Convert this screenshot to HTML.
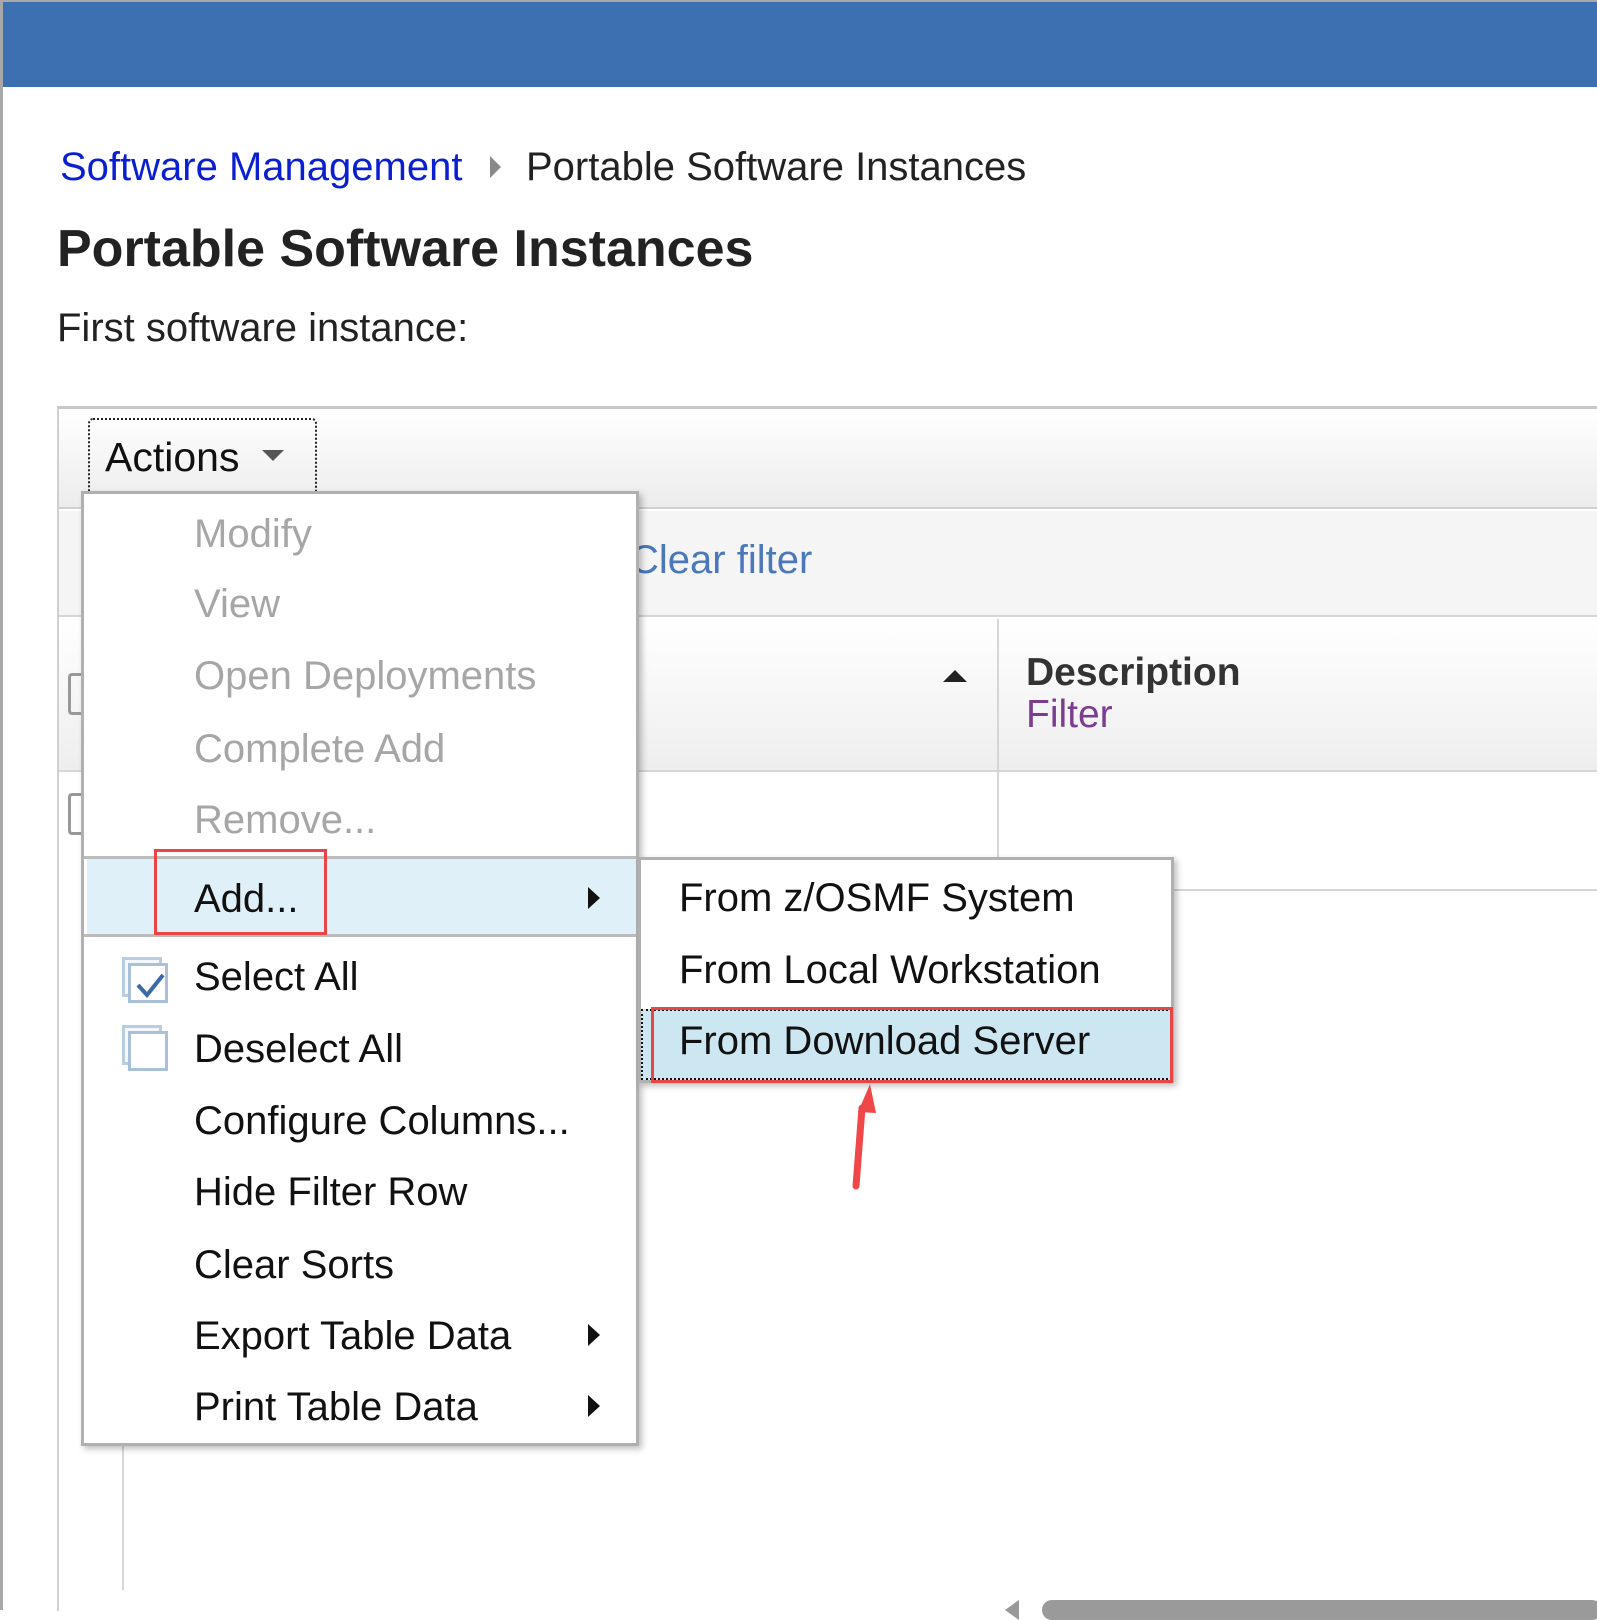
<!DOCTYPE html>
<html><head><style>
*{margin:0;padding:0;box-sizing:border-box}
body{width:1597px;height:1610px;position:relative;overflow:hidden;background:#fff;font-family:"Liberation Sans",Arial,sans-serif;color:#222}
.a{position:absolute;white-space:nowrap}
.mi{position:absolute;left:110px;font-size:40px;line-height:40px}
.dis{color:#a6a6a6}
</style></head><body>
<div class="a" style="left:0;top:0;width:3px;height:1610px;background:#a8a8a8"></div>
<div class="a" style="left:3px;top:0;width:1594px;height:87px;background:#3c70b0;border-top:2px solid #a8a8a8"></div>
<div class="a" style="left:60px;top:145px;font-size:40px;line-height:44px;color:#0a1fd0">Software Management</div>
<div class="a" style="left:490px;top:156px;width:0;height:0;border-left:11px solid #888;border-top:11px solid transparent;border-bottom:11px solid transparent"></div>
<div class="a" style="left:526px;top:145px;font-size:40px;line-height:44px;color:#222">Portable Software Instances</div>
<div class="a" style="left:57px;top:222px;font-size:52px;line-height:54px;font-weight:bold;color:#222">Portable Software Instances</div>
<div class="a" style="left:57px;top:306px;font-size:40px;line-height:44px;color:#222">First software instance:</div>

<!-- table -->
<div class="a" style="left:57px;top:406px;width:1540px;height:1205px;border-left:2px solid #d0d0d0;border-top:3px solid #c8c8c8"></div>
<div class="a" style="left:59px;top:409px;width:1538px;height:100px;background:linear-gradient(#fff,#ececec);border-bottom:2px solid #d0d0d0"></div>
<div class="a" style="left:88px;top:418px;width:229px;height:75px;border:2px dotted #222;border-bottom:none;border-radius:5px 5px 0 0"></div>
<div class="a" style="left:105px;top:435px;font-size:41px;line-height:44px;color:#111">Actions</div>
<div class="a" style="left:262px;top:450px;width:0;height:0;border-top:11px solid #555;border-left:11px solid transparent;border-right:11px solid transparent"></div>
<div class="a" style="left:59px;top:511px;width:1538px;height:106px;background:#f5f5f5;border-bottom:2px solid #d6d6d6"></div>
<div class="a" style="left:630px;top:538px;font-size:40px;line-height:44px;color:#4a78b8">Clear filter</div>
<div class="a" style="left:59px;top:619px;width:1538px;height:153px;background:linear-gradient(#fff,#eeeeee);border-bottom:2px solid #d6d6d6"></div>
<div class="a" style="left:997px;top:619px;width:2px;height:272px;background:#d6d6d6"></div>
<div class="a" style="left:943px;top:670px;width:0;height:0;border-bottom:12px solid #222;border-left:12px solid transparent;border-right:12px solid transparent"></div>
<div class="a" style="left:1026px;top:651px;font-size:39px;line-height:44px;font-weight:bold;color:#333">Description</div>
<div class="a" style="left:1026px;top:693px;font-size:39px;line-height:44px;color:#7a3d90">Filter</div>
<div class="a" style="left:1166px;top:889px;width:431px;height:2px;background:#d6d6d6"></div>
<div class="a" style="left:68px;top:673px;width:14px;height:42px;border:3px solid #999;border-right:none;border-radius:4px 0 0 4px"></div>
<div class="a" style="left:68px;top:793px;width:14px;height:42px;border:3px solid #999;border-right:none;border-radius:4px 0 0 4px"></div>
<div class="a" style="left:122px;top:1440px;width:2px;height:150px;background:#d8d8d8"></div>
<div class="a" style="left:1042px;top:1600px;width:560px;height:20px;background:#9a9a9a;border-radius:10px"></div>
<div class="a" style="left:1005px;top:1600px;width:0;height:0;border-right:14px solid #999;border-top:10px solid transparent;border-bottom:10px solid transparent"></div>

<!-- menu -->
<div class="a" style="left:81px;top:491px;width:558px;height:955px;background:#fff;border:3px solid #b0b0b0;box-shadow:3px 3px 6px rgba(0,0,0,.25)">
 <div class="mi dis" style="top:20px">Modify</div>
 <div class="mi dis" style="top:90px">View</div>
 <div class="mi dis" style="top:162px">Open Deployments</div>
 <div class="mi dis" style="top:235px">Complete Add</div>
 <div class="mi dis" style="top:306px">Remove...</div>
 <div class="a" style="left:0;top:362px;width:552px;height:3px;background:#bbb"></div>
 <div class="a" style="left:3px;top:365px;width:549px;height:75px;background:#dff0f8"></div>
 <div class="mi" style="top:385px;color:#111">Add...</div>
 <div class="a" style="left:504px;top:393px;width:0;height:0;border-left:12px solid #111;border-top:11px solid transparent;border-bottom:11px solid transparent"></div>
 <div class="a" style="left:0;top:440px;width:552px;height:3px;background:#bbb"></div>
 <div class="a" style="left:38px;top:463px;width:40px;height:40px;border:3px solid #b8cde0;background:#f4f8fc"></div>
 <div class="a" style="left:44px;top:469px;width:40px;height:40px;border:3px solid #a9c0d8;background:#fff"></div>
 <svg class="a" style="left:46px;top:471px" width="40" height="40"><path d="M8 20 L17 30 L33 10" stroke="#3a6aa8" stroke-width="4" fill="none"/></svg>
 <div class="mi" style="top:463px;color:#111">Select All</div>
 <div class="a" style="left:38px;top:531px;width:40px;height:40px;border:3px solid #b8cde0;background:#f4f8fc"></div>
 <div class="a" style="left:44px;top:537px;width:40px;height:40px;border:3px solid #a9c0d8;background:#fff"></div>
 <div class="mi" style="top:535px;color:#111">Deselect All</div>
 <div class="mi" style="top:607px;color:#111">Configure Columns...</div>
 <div class="mi" style="top:678px;color:#111">Hide Filter Row</div>
 <div class="mi" style="top:751px;color:#111">Clear Sorts</div>
 <div class="mi" style="top:822px;color:#111">Export Table Data</div>
 <div class="a" style="left:504px;top:830px;width:0;height:0;border-left:12px solid #111;border-top:11px solid transparent;border-bottom:11px solid transparent"></div>
 <div class="mi" style="top:893px;color:#111">Print Table Data</div>
 <div class="a" style="left:504px;top:901px;width:0;height:0;border-left:12px solid #111;border-top:11px solid transparent;border-bottom:11px solid transparent"></div>
</div>
<div class="a" style="left:154px;top:849px;width:173px;height:86px;border:3px solid #e84545"></div>

<!-- submenu -->
<div class="a" style="left:638px;top:857px;width:536px;height:226px;background:#fff;border:3px solid #b0b0b0;box-shadow:3px 3px 6px rgba(0,0,0,.25)"></div>
<div class="a" style="left:679px;top:876px;font-size:40px;line-height:44px;color:#111">From z/OSMF System</div>
<div class="a" style="left:679px;top:948px;font-size:40px;line-height:44px;color:#111">From Local Workstation</div>
<div class="a" style="left:641px;top:1009px;width:531px;height:71px;background:#cde7f2;border:2px dotted #111"></div>
<div class="a" style="left:651px;top:1007px;width:522px;height:76px;border:3px solid #e84545"></div>
<div class="a" style="left:679px;top:1019px;font-size:40px;line-height:44px;color:#111">From Download Server</div>
<svg class="a" style="left:842px;top:1078px" width="40" height="115"><path d="M14 108 L20 30" stroke="#f04848" stroke-width="7" stroke-linecap="round"/><path d="M28 6 L16 34 L34 35 Z" fill="#f04848"/></svg>
</body></html>
